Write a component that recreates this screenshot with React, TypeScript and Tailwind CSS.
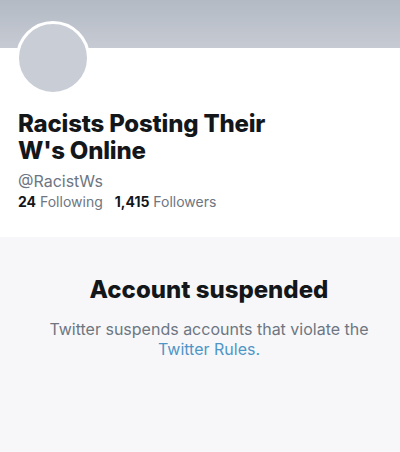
export default function App() {
  return (
    <div className="w-[400px] h-[452px] overflow-hidden bg-[#f7f7fa] font-['Inter','Noto_Sans',sans-serif]">
      <div className="bg-white">
        <div className="h-12 bg-gradient-to-b from-[#b3bac4] to-[#c6cad3]" />
        <div className="px-[18px] pb-[25px]">
          <div className="-mt-[27px] ml-[-2px] w-[74px] h-[74px] rounded-full border-[3px] border-white bg-[#c9cdd6]" />
          <h1 className="mt-[15px] text-[24px] leading-[27px] font-extrabold text-[#14171a] tracking-[-0.2px] w-[270px]">
            Racists Posting Their W's Online
          </h1>
          <div className="mt-[7px] text-[16px] leading-[20px] text-[#6d7681]">@RacistWs</div>
          <div className="mt-[1px] text-[14px] leading-[20px] text-[#6d7681]">
            <span className="font-bold text-[#14171a]">24</span> Following
            <span className="ml-3 font-bold text-[#14171a]">1,415</span> Followers
          </div>
        </div>
      </div>
      <div className="pt-[39px] pl-[33px] pr-[15px] text-center">
        <h2 className="text-[24px] leading-[28px] font-extrabold text-[#14171a]">Account suspended</h2>
        <p className="mt-[15px] text-[16px] leading-[20px] text-[#6d7681]">
          Twitter suspends accounts that violate the{" "}
          <span className="text-[#4f95c6]">Twitter Rules.</span>
        </p>
      </div>
    </div>
  )
}
